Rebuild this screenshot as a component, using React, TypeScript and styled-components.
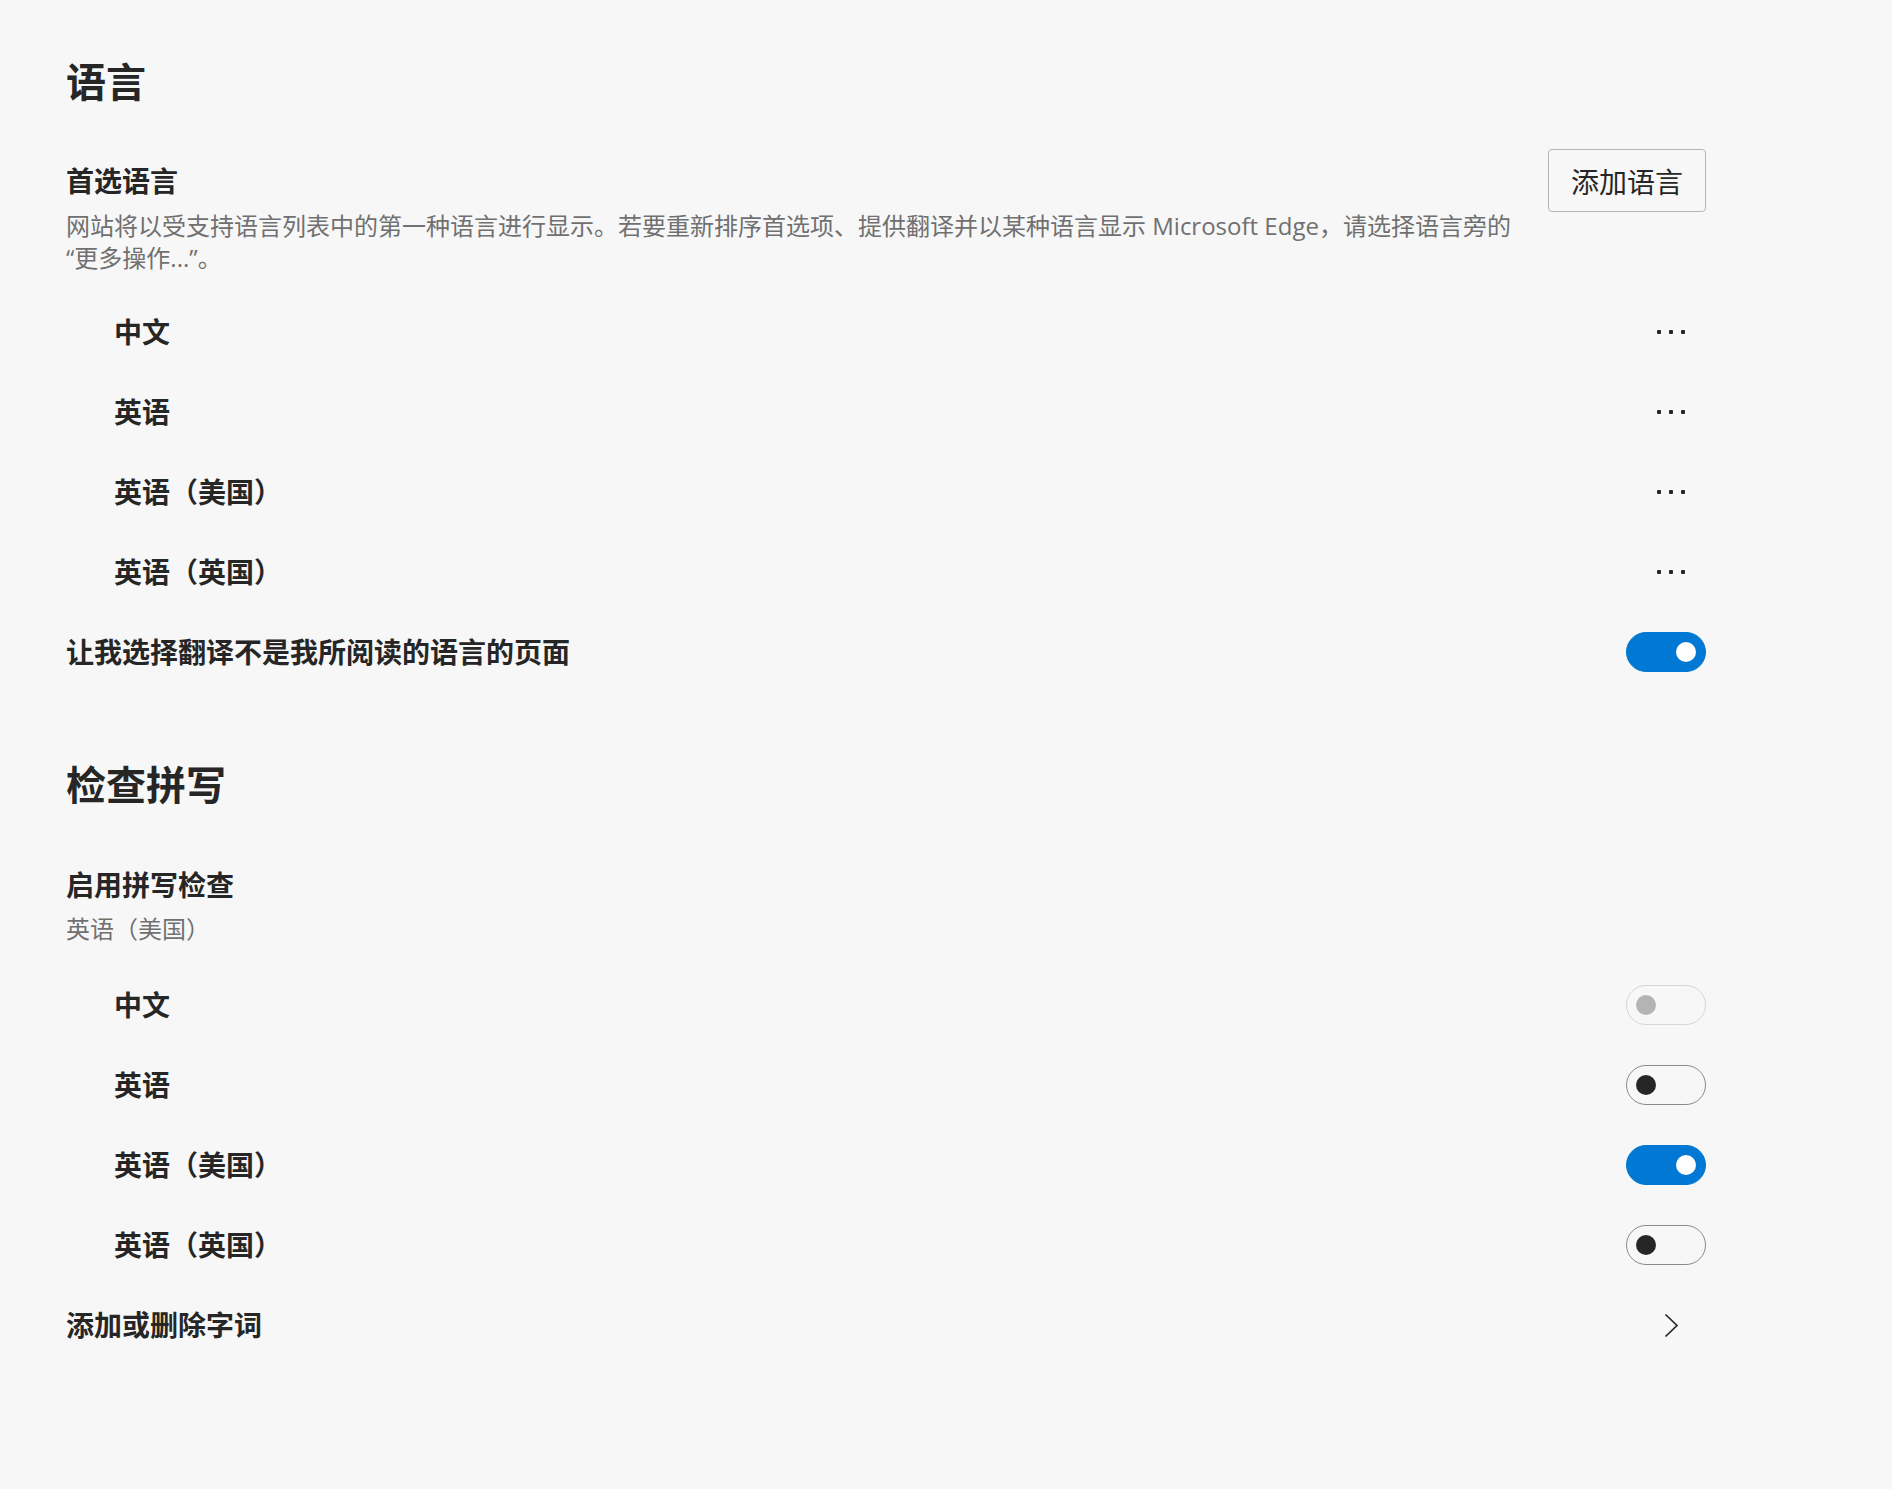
import React from 'react';
import styled, { createGlobalStyle } from 'styled-components';

const GlobalStyle = createGlobalStyle`
  html, body {
    margin: 0;
    padding: 0;
    background: #f7f7f7;
  }
  body {
    font-family: "Open Sans", "Noto Sans CJK SC", sans-serif;
    color: #262626;
  }
`;

const Page = styled.div`
  min-height: 1489px;
  padding: 54px 0 0 66px;
  box-sizing: border-box;
`;

const Column = styled.div`
  width: 1640px;
  display: flex;
  flex-direction: column;
`;

const SectionTitle = styled.h2<{ $gap?: number }>`
  margin: ${p => p.$gap ?? 0}px 0 0;
  font-size: 40px;
  line-height: 56px;
  font-weight: 700;
  color: #262626;
`;

const PrefRow = styled.div`
  display: flex;
  align-items: flex-start;
  justify-content: space-between;
  margin-top: 39px;
`;

const PrefText = styled.div`
  display: flex;
  flex-direction: column;
  padding-top: 12px;
`;

const BlockTitle = styled.div<{ $gap?: number }>`
  margin-top: ${p => p.$gap ?? 0}px;
  font-size: 28px;
  line-height: 40px;
  font-weight: 700;
`;

const Description = styled.div<{ $gap: number }>`
  margin-top: ${p => p.$gap}px;
  max-width: 1460px;
  font-size: 24px;
  line-height: 32px;
  color: #707070;
`;

const OutlineButton = styled.button`
  flex: none;
  width: 158px;
  height: 63px;
  padding: 0;
  border: 1.5px solid #b4b4b4;
  border-radius: 4px;
  background: #f7f7f7;
  font-family: inherit;
  font-size: 28px;
  color: #262626;
  cursor: pointer;
`;

const List = styled.div<{ $gap: number }>`
  display: flex;
  flex-direction: column;
  margin-top: ${p => p.$gap}px;
`;

const Row = styled.div<{ $indent?: boolean }>`
  height: 80px;
  display: flex;
  align-items: center;
  justify-content: space-between;
  padding-left: ${p => (p.$indent ? 48 : 0)}px;
`;

const RowLabel = styled.span`
  font-size: 28px;
  font-weight: 700;
  line-height: 40px;
`;

const IconButton = styled.button`
  width: 70px;
  height: 48px;
  display: flex;
  align-items: center;
  justify-content: center;
  padding: 0;
  border: none;
  background: transparent;
  color: #262626;
  cursor: pointer;
`;

const Track = styled.div<{ $state: 'on' | 'off' | 'disabled' }>`
  position: relative;
  width: 80px;
  height: 40px;
  box-sizing: border-box;
  border-radius: 20px;
  background: ${p => (p.$state === 'on' ? '#0078d4' : 'transparent')};
  border: 1.5px solid
    ${p => (p.$state === 'on' ? '#0078d4' : p.$state === 'off' ? '#8a8a8a' : '#d6d6d6')};
`;

const Knob = styled.span<{ $state: 'on' | 'off' | 'disabled' }>`
  position: absolute;
  top: 50%;
  width: 20px;
  height: 20px;
  margin-top: -10px;
  border-radius: 50%;
  left: ${p => (p.$state === 'on' ? 48.5 : 8.5)}px;
  background: ${p => (p.$state === 'on' ? '#ffffff' : p.$state === 'off' ? '#262626' : '#b4b4b4')};
`;

type ToggleState = 'on' | 'off' | 'disabled';

function Toggle({ state }: { state: ToggleState }) {
  return (
    <Track $state={state} role="switch" aria-checked={state === 'on'}>
      <Knob $state={state} />
    </Track>
  );
}

function MoreDots() {
  return (
    <svg width="28" height="6" viewBox="0 0 28 6" fill="currentColor">
      <rect x="0" y="1" width="4" height="4" rx="1" />
      <rect x="12" y="1" width="4" height="4" rx="1" />
      <rect x="24" y="1" width="4" height="4" rx="1" />
    </svg>
  );
}

function Chevron() {
  return (
    <svg width="15" height="25" viewBox="0 0 15 25" fill="none">
      <polyline points="1.5,1.5 13,12.5 1.5,23.5" stroke="#262626" strokeWidth="1.7" />
    </svg>
  );
}

const preferred = ['中文', '英语', '英语（美国）', '英语（英国）'];

const spellLangs: { name: string; state: ToggleState }[] = [
  { name: '中文', state: 'disabled' },
  { name: '英语', state: 'off' },
  { name: '英语（美国）', state: 'on' },
  { name: '英语（英国）', state: 'off' },
];

export default function App() {
  return (
    <>
      <GlobalStyle />
      <Page>
        <Column>
          <SectionTitle>语言</SectionTitle>

          <PrefRow>
            <PrefText>
              <BlockTitle>首选语言</BlockTitle>
              <Description $gap={9}>
                网站将以受支持语言列表中的第一种语言进行显示。若要重新排序首选项、提供翻译并以某种语言显示 Microsoft Edge，请选择语言旁的<wbr />“更多操作...”。
              </Description>
            </PrefText>
            <OutlineButton>添加语言</OutlineButton>
          </PrefRow>

          <List $gap={18}>
            {preferred.map(name => (
              <Row $indent key={name}>
                <RowLabel>{name}</RowLabel>
                <IconButton aria-label="更多操作">
                  <MoreDots />
                </IconButton>
              </Row>
            ))}
            <Row>
              <RowLabel>让我选择翻译不是我所阅读的语言的页面</RowLabel>
              <Toggle state="on" />
            </Row>
          </List>

          <SectionTitle $gap={65}>检查拼写</SectionTitle>

          <BlockTitle $gap={52}>启用拼写检查</BlockTitle>
          <Description $gap={8}>英语（美国）</Description>

          <List $gap={20}>
            {spellLangs.map(l => (
              <Row $indent key={l.name}>
                <RowLabel>{l.name}</RowLabel>
                <Toggle state={l.state} />
              </Row>
            ))}
            <Row>
              <RowLabel>添加或删除字词</RowLabel>
              <IconButton aria-label="添加或删除字词">
                <Chevron />
              </IconButton>
            </Row>
          </List>
        </Column>
      </Page>
    </>
  );
}
